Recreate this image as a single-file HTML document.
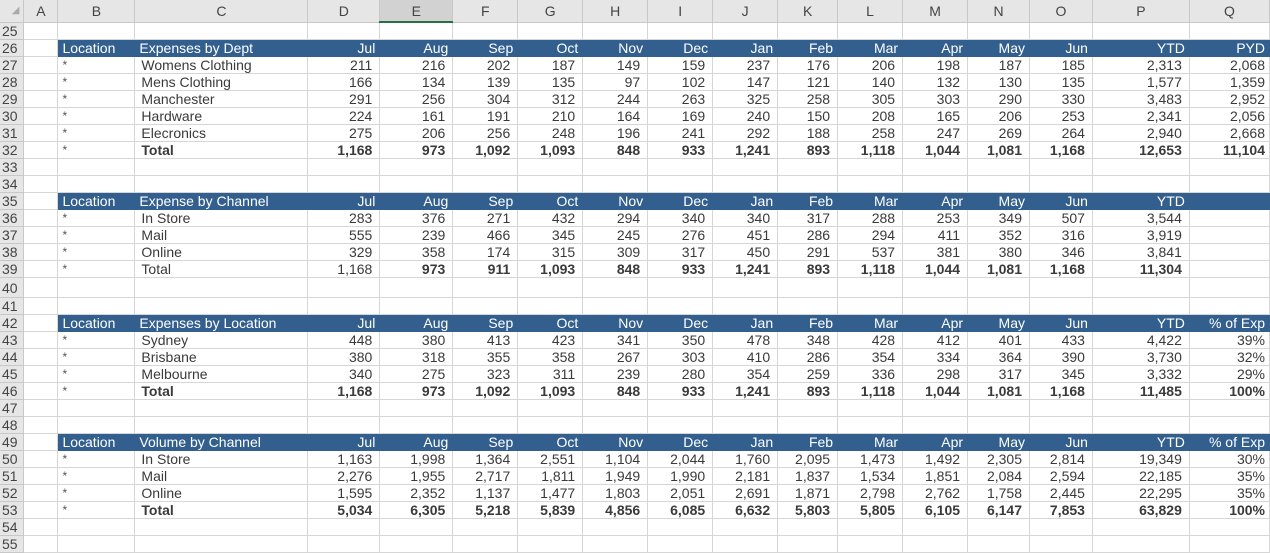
<!DOCTYPE html>
<html><head><meta charset="utf-8"><style>
body{margin:0;background:#fff;width:1270px;height:549px;overflow:hidden}
table{border-collapse:collapse;table-layout:fixed;font-family:"Liberation Sans",Arial,sans-serif;font-size:14px;color:#3a3a3a}
td{height:16px;line-height:16px;padding:0 4px;border-right:1px solid #d6d6d6;border-bottom:1px solid #d6d6d6;white-space:nowrap;overflow:hidden;text-align:right}
tr.h td{height:21px;background:#e6e6e6;color:#444;text-align:center;border-color:#c8c8c8;font-size:14px}
td.rn{background:#e6e6e6;text-align:left;padding-left:2px;color:#444;border-color:#c8c8c8}
tr.b td{background:#335f8f;color:#fff;border-color:#335f8f}
tr.b td.rn,tr.b td.a{background:#e6e6e6;color:#444;border-color:#c8c8c8}
tr.b td.a{background:#fff;border-color:#d6d6d6}
td.l{text-align:left}
td.s{text-align:left;font-size:12px;color:#555}
td.i{text-align:left;padding-left:6px}
tr td.n{padding-right:7px}
tr.t td{font-weight:bold}
tr.t td.s{font-weight:normal}
.nb{font-weight:normal!important}
tr.tall td{height:19px}
</style></head><body>
<table>
<colgroup><col style="width:24px"><col style="width:34px"><col style="width:77px"><col style="width:173px"><col style="width:72px"><col style="width:73px"><col style="width:65px"><col style="width:65px"><col style="width:65px"><col style="width:65px"><col style="width:65px"><col style="width:60px"><col style="width:65px"><col style="width:65px"><col style="width:62px"><col style="width:63px"><col style="width:97px"><col style="width:80px"></colgroup>
<tr class="h"><td style="color:#aaa;font-size:10px;text-align:right">◢</td><td>A</td><td>B</td><td>C</td><td>D</td><td style="background:#d2d2d2;border-bottom:2px solid #217346">E</td><td>F</td><td>G</td><td>H</td><td>I</td><td>J</td><td>K</td><td>L</td><td>M</td><td>N</td><td>O</td><td>P</td><td>Q</td></tr>
<tr><td class="rn">25</td><td></td><td></td><td></td><td></td><td></td><td></td><td></td><td></td><td></td><td></td><td></td><td></td><td></td><td></td><td></td><td></td><td></td></tr>
<tr class="b"><td class="rn">26</td><td class="a"></td><td class="l">Location</td><td class="l">Expenses by Dept</td><td>Jul</td><td>Aug</td><td>Sep</td><td>Oct</td><td>Nov</td><td>Dec</td><td>Jan</td><td>Feb</td><td>Mar</td><td>Apr</td><td>May</td><td>Jun</td><td>YTD</td><td>PYD</td></tr>
<tr><td class="rn">27</td><td></td><td class="s">*</td><td class="i">Womens Clothing</td><td class="n">211</td><td class="n">216</td><td class="n">202</td><td class="n">187</td><td class="n">149</td><td class="n">159</td><td class="n">237</td><td class="n">176</td><td class="n">206</td><td class="n">198</td><td class="n">187</td><td class="n">185</td><td class="n">2,313</td><td>2,068</td></tr>
<tr><td class="rn">28</td><td></td><td class="s">*</td><td class="i">Mens Clothing</td><td class="n">166</td><td class="n">134</td><td class="n">139</td><td class="n">135</td><td class="n">97</td><td class="n">102</td><td class="n">147</td><td class="n">121</td><td class="n">140</td><td class="n">132</td><td class="n">130</td><td class="n">135</td><td class="n">1,577</td><td>1,359</td></tr>
<tr><td class="rn">29</td><td></td><td class="s">*</td><td class="i">Manchester</td><td class="n">291</td><td class="n">256</td><td class="n">304</td><td class="n">312</td><td class="n">244</td><td class="n">263</td><td class="n">325</td><td class="n">258</td><td class="n">305</td><td class="n">303</td><td class="n">290</td><td class="n">330</td><td class="n">3,483</td><td>2,952</td></tr>
<tr><td class="rn">30</td><td></td><td class="s">*</td><td class="i">Hardware</td><td class="n">224</td><td class="n">161</td><td class="n">191</td><td class="n">210</td><td class="n">164</td><td class="n">169</td><td class="n">240</td><td class="n">150</td><td class="n">208</td><td class="n">165</td><td class="n">206</td><td class="n">253</td><td class="n">2,341</td><td>2,056</td></tr>
<tr><td class="rn">31</td><td></td><td class="s">*</td><td class="i">Elecronics</td><td class="n">275</td><td class="n">206</td><td class="n">256</td><td class="n">248</td><td class="n">196</td><td class="n">241</td><td class="n">292</td><td class="n">188</td><td class="n">258</td><td class="n">247</td><td class="n">269</td><td class="n">264</td><td class="n">2,940</td><td>2,668</td></tr>
<tr class="t"><td class="rn nb">32</td><td></td><td class="s">*</td><td class="i">Total</td><td class="n">1,168</td><td class="n">973</td><td class="n">1,092</td><td class="n">1,093</td><td class="n">848</td><td class="n">933</td><td class="n">1,241</td><td class="n">893</td><td class="n">1,118</td><td class="n">1,044</td><td class="n">1,081</td><td class="n">1,168</td><td class="n">12,653</td><td>11,104</td></tr>
<tr><td class="rn">33</td><td></td><td></td><td></td><td></td><td></td><td></td><td></td><td></td><td></td><td></td><td></td><td></td><td></td><td></td><td></td><td></td><td></td></tr>
<tr><td class="rn">34</td><td></td><td></td><td></td><td></td><td></td><td></td><td></td><td></td><td></td><td></td><td></td><td></td><td></td><td></td><td></td><td></td><td></td></tr>
<tr class="b"><td class="rn">35</td><td class="a"></td><td class="l">Location</td><td class="l">Expense by Channel</td><td>Jul</td><td>Aug</td><td>Sep</td><td>Oct</td><td>Nov</td><td>Dec</td><td>Jan</td><td>Feb</td><td>Mar</td><td>Apr</td><td>May</td><td>Jun</td><td>YTD</td><td></td></tr>
<tr><td class="rn">36</td><td></td><td class="s">*</td><td class="i">In Store</td><td class="n">283</td><td class="n">376</td><td class="n">271</td><td class="n">432</td><td class="n">294</td><td class="n">340</td><td class="n">340</td><td class="n">317</td><td class="n">288</td><td class="n">253</td><td class="n">349</td><td class="n">507</td><td class="n">3,544</td><td></td></tr>
<tr><td class="rn">37</td><td></td><td class="s">*</td><td class="i">Mail</td><td class="n">555</td><td class="n">239</td><td class="n">466</td><td class="n">345</td><td class="n">245</td><td class="n">276</td><td class="n">451</td><td class="n">286</td><td class="n">294</td><td class="n">411</td><td class="n">352</td><td class="n">316</td><td class="n">3,919</td><td></td></tr>
<tr><td class="rn">38</td><td></td><td class="s">*</td><td class="i">Online</td><td class="n">329</td><td class="n">358</td><td class="n">174</td><td class="n">315</td><td class="n">309</td><td class="n">317</td><td class="n">450</td><td class="n">291</td><td class="n">537</td><td class="n">381</td><td class="n">380</td><td class="n">346</td><td class="n">3,841</td><td></td></tr>
<tr class="t"><td class="rn nb">39</td><td></td><td class="s">*</td><td class="i nb">Total</td><td class="n nb">1,168</td><td class="n">973</td><td class="n">911</td><td class="n">1,093</td><td class="n">848</td><td class="n">933</td><td class="n">1,241</td><td class="n">893</td><td class="n">1,118</td><td class="n">1,044</td><td class="n">1,081</td><td class="n">1,168</td><td class="n">11,304</td><td></td></tr>
<tr class="tall"><td class="rn">40</td><td></td><td></td><td></td><td></td><td></td><td></td><td></td><td></td><td></td><td></td><td></td><td></td><td></td><td></td><td></td><td></td><td></td></tr>
<tr><td class="rn">41</td><td></td><td></td><td></td><td></td><td></td><td></td><td></td><td></td><td></td><td></td><td></td><td></td><td></td><td></td><td></td><td></td><td></td></tr>
<tr class="b"><td class="rn">42</td><td class="a"></td><td class="l">Location</td><td class="l">Expenses by Location</td><td>Jul</td><td>Aug</td><td>Sep</td><td>Oct</td><td>Nov</td><td>Dec</td><td>Jan</td><td>Feb</td><td>Mar</td><td>Apr</td><td>May</td><td>Jun</td><td>YTD</td><td>% of Exp</td></tr>
<tr><td class="rn">43</td><td></td><td class="s">*</td><td class="i">Sydney</td><td class="n">448</td><td class="n">380</td><td class="n">413</td><td class="n">423</td><td class="n">341</td><td class="n">350</td><td class="n">478</td><td class="n">348</td><td class="n">428</td><td class="n">412</td><td class="n">401</td><td class="n">433</td><td class="n">4,422</td><td>39%</td></tr>
<tr><td class="rn">44</td><td></td><td class="s">*</td><td class="i">Brisbane</td><td class="n">380</td><td class="n">318</td><td class="n">355</td><td class="n">358</td><td class="n">267</td><td class="n">303</td><td class="n">410</td><td class="n">286</td><td class="n">354</td><td class="n">334</td><td class="n">364</td><td class="n">390</td><td class="n">3,730</td><td>32%</td></tr>
<tr><td class="rn">45</td><td></td><td class="s">*</td><td class="i">Melbourne</td><td class="n">340</td><td class="n">275</td><td class="n">323</td><td class="n">311</td><td class="n">239</td><td class="n">280</td><td class="n">354</td><td class="n">259</td><td class="n">336</td><td class="n">298</td><td class="n">317</td><td class="n">345</td><td class="n">3,332</td><td>29%</td></tr>
<tr class="t"><td class="rn nb">46</td><td></td><td class="s">*</td><td class="i">Total</td><td class="n">1,168</td><td class="n">973</td><td class="n">1,092</td><td class="n">1,093</td><td class="n">848</td><td class="n">933</td><td class="n">1,241</td><td class="n">893</td><td class="n">1,118</td><td class="n">1,044</td><td class="n">1,081</td><td class="n">1,168</td><td class="n">11,485</td><td>100%</td></tr>
<tr><td class="rn">47</td><td></td><td></td><td></td><td></td><td></td><td></td><td></td><td></td><td></td><td></td><td></td><td></td><td></td><td></td><td></td><td></td><td></td></tr>
<tr><td class="rn">48</td><td></td><td></td><td></td><td></td><td></td><td></td><td></td><td></td><td></td><td></td><td></td><td></td><td></td><td></td><td></td><td></td><td></td></tr>
<tr class="b"><td class="rn">49</td><td class="a"></td><td class="l">Location</td><td class="l">Volume by Channel</td><td>Jul</td><td>Aug</td><td>Sep</td><td>Oct</td><td>Nov</td><td>Dec</td><td>Jan</td><td>Feb</td><td>Mar</td><td>Apr</td><td>May</td><td>Jun</td><td>YTD</td><td>% of Exp</td></tr>
<tr><td class="rn">50</td><td></td><td class="s">*</td><td class="i">In Store</td><td class="n">1,163</td><td class="n">1,998</td><td class="n">1,364</td><td class="n">2,551</td><td class="n">1,104</td><td class="n">2,044</td><td class="n">1,760</td><td class="n">2,095</td><td class="n">1,473</td><td class="n">1,492</td><td class="n">2,305</td><td class="n">2,814</td><td class="n">19,349</td><td>30%</td></tr>
<tr><td class="rn">51</td><td></td><td class="s">*</td><td class="i">Mail</td><td class="n">2,276</td><td class="n">1,955</td><td class="n">2,717</td><td class="n">1,811</td><td class="n">1,949</td><td class="n">1,990</td><td class="n">2,181</td><td class="n">1,837</td><td class="n">1,534</td><td class="n">1,851</td><td class="n">2,084</td><td class="n">2,594</td><td class="n">22,185</td><td>35%</td></tr>
<tr><td class="rn">52</td><td></td><td class="s">*</td><td class="i">Online</td><td class="n">1,595</td><td class="n">2,352</td><td class="n">1,137</td><td class="n">1,477</td><td class="n">1,803</td><td class="n">2,051</td><td class="n">2,691</td><td class="n">1,871</td><td class="n">2,798</td><td class="n">2,762</td><td class="n">1,758</td><td class="n">2,445</td><td class="n">22,295</td><td>35%</td></tr>
<tr class="t"><td class="rn nb">53</td><td></td><td class="s">*</td><td class="i">Total</td><td class="n">5,034</td><td class="n">6,305</td><td class="n">5,218</td><td class="n">5,839</td><td class="n">4,856</td><td class="n">6,085</td><td class="n">6,632</td><td class="n">5,803</td><td class="n">5,805</td><td class="n">6,105</td><td class="n">6,147</td><td class="n">7,853</td><td class="n">63,829</td><td>100%</td></tr>
<tr><td class="rn">54</td><td></td><td></td><td></td><td></td><td></td><td></td><td></td><td></td><td></td><td></td><td></td><td></td><td></td><td></td><td></td><td></td><td></td></tr>
<tr><td class="rn">55</td><td></td><td></td><td></td><td></td><td></td><td></td><td></td><td></td><td></td><td></td><td></td><td></td><td></td><td></td><td></td><td></td><td></td></tr>
</table>
</body></html>
